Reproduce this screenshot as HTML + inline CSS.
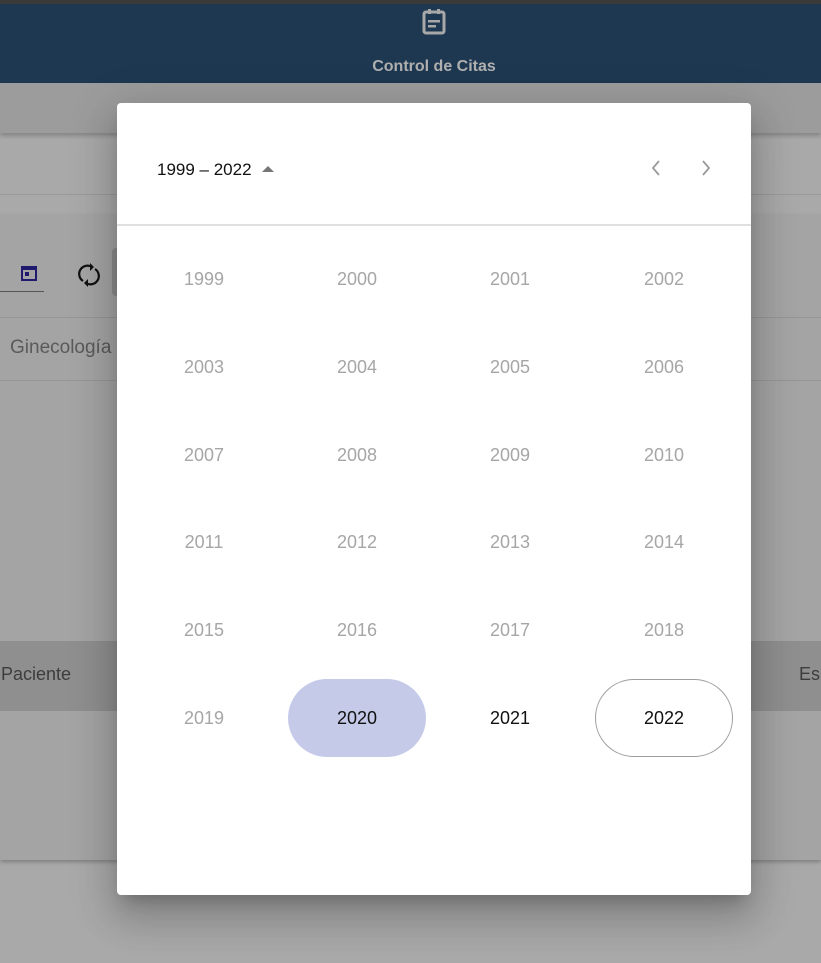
<!DOCTYPE html>
<html><head><meta charset="utf-8"><style>
*{margin:0;padding:0;box-sizing:border-box}
body{width:821px;height:963px;overflow:hidden;background:#a9a9a9;font-family:"Liberation Sans",sans-serif;position:relative}
.abs{position:absolute}
.yr{position:absolute;width:138px;height:78px;line-height:78px;text-align:center;font-size:18px;color:#a6a6a6;border-radius:39px}
</style></head><body>
<div class="abs" style="left:0;top:0;width:821px;height:4px;background:#3a3a3a"></div>
<div class="abs" style="left:0;top:4px;width:821px;height:79px;background:#1e3851"></div>
<svg class="abs" style="left:421px;top:8px" width="26" height="28" viewBox="0 0 26 28"><rect x="3" y="4" width="20" height="21" rx="2" fill="none" stroke="#a8a8a8" stroke-width="3"/><rect x="7" y="1" width="3" height="5" fill="#a8a8a8"/><rect x="16" y="1" width="3" height="5" fill="#a8a8a8"/><rect x="7" y="12" width="12" height="2.5" fill="#a8a8a8"/><rect x="7" y="17" width="8" height="2.5" fill="#a8a8a8"/></svg>
<div class="abs" style="left:0;top:58px;width:868px;text-align:center;font-size:16px;color:#b0b0b0;font-weight:bold">Control de Citas</div>
<div class="abs" style="left:0;top:83px;width:821px;height:50px;background:#9c9c9c;box-shadow:0 3px 4px rgba(0,0,0,.2)"></div>
<div class="abs" style="left:0;top:194px;width:821px;height:1px;background:#999"></div>
<div class="abs" style="left:0;top:215px;width:821px;height:645px;background:#a4a4a4;box-shadow:0 2px 4px rgba(0,0,0,.25)"></div>
<svg class="abs" style="left:20px;top:264px" width="18" height="18" viewBox="0 0 18 18"><rect x="2" y="3" width="14" height="13" fill="none" stroke="#1f1a6e" stroke-width="2"/><rect x="2" y="3" width="14" height="3" fill="#1f1a6e"/><rect x="5" y="8" width="4" height="4" fill="#1f1a6e"/></svg>
<div class="abs" style="left:0;top:291px;width:44px;height:1px;background:#555"></div>
<svg class="abs" style="left:77px;top:261px" width="24" height="28" viewBox="0 0 24 28"><path d="M6 20A8 8 0 0 1 15 6" fill="none" stroke="#111" stroke-width="2.2"/><path d="M18 8A8 8 0 0 1 9 22" fill="none" stroke="#111" stroke-width="2.2"/><path d="M13 2l4 4-4 4z" fill="#111"/><path d="M11 18l-4 4 4 4z" fill="#111"/></svg>
<div class="abs" style="left:112px;top:248px;width:10px;height:48px;background:#8c8c8c;border-radius:4px 0 0 4px"></div>
<div class="abs" style="left:0;top:317px;width:821px;height:1px;background:#969696"></div>
<div class="abs" style="left:10px;top:337px;font-size:19px;color:#5a5a5a">Ginecología</div>
<div class="abs" style="left:0;top:380px;width:821px;height:1px;background:#969696"></div>
<div class="abs" style="left:0;top:641px;width:821px;height:70px;background:#8f8f8f"></div>
<div class="abs" style="left:1px;top:664px;font-size:18px;color:#3d3d3d">Paciente</div>
<div class="abs" style="left:799px;top:664px;font-size:18px;color:#3d3d3d">Es</div>

<div class="abs" style="left:117px;top:103px;width:634px;height:792px;background:#fff;border-radius:4px;box-shadow:0 11px 15px -7px rgba(0,0,0,.2),0 24px 38px 3px rgba(0,0,0,.14),0 9px 46px 8px rgba(0,0,0,.12)">
<div class="abs" style="left:40px;top:57px;font-size:17px;color:#111">1999 – 2022</div>
<svg class="abs" style="left:144px;top:62px" width="14" height="8"><path d="M1 7L7 1l6 6z" fill="#777"/></svg>
<svg class="abs" style="left:533px;top:56px" width="12" height="18"><path d="M9 2L3 9l6 7" fill="none" stroke="#9a9a9a" stroke-width="1.8"/></svg>
<svg class="abs" style="left:583px;top:56px" width="12" height="18"><path d="M3 2l6 7-6 7" fill="none" stroke="#9a9a9a" stroke-width="1.8"/></svg>
<div class="abs" style="left:0;top:121px;width:634px;height:2px;background:#e0e0e0"></div>
<div class="yr" style="left:18px;top:137px">1999</div><div class="yr" style="left:171px;top:137px">2000</div><div class="yr" style="left:324px;top:137px">2001</div><div class="yr" style="left:478px;top:137px">2002</div>
<div class="yr" style="left:18px;top:225px">2003</div><div class="yr" style="left:171px;top:225px">2004</div><div class="yr" style="left:324px;top:225px">2005</div><div class="yr" style="left:478px;top:225px">2006</div>
<div class="yr" style="left:18px;top:313px">2007</div><div class="yr" style="left:171px;top:313px">2008</div><div class="yr" style="left:324px;top:313px">2009</div><div class="yr" style="left:478px;top:313px">2010</div>
<div class="yr" style="left:18px;top:400px">2011</div><div class="yr" style="left:171px;top:400px">2012</div><div class="yr" style="left:324px;top:400px">2013</div><div class="yr" style="left:478px;top:400px">2014</div>
<div class="yr" style="left:18px;top:488px">2015</div><div class="yr" style="left:171px;top:488px">2016</div><div class="yr" style="left:324px;top:488px">2017</div><div class="yr" style="left:478px;top:488px">2018</div>
<div class="yr" style="left:18px;top:576px">2019</div><div class="yr" style="left:171px;top:576px;background:#c5cae9;color:#111">2020</div><div class="yr" style="left:324px;top:576px;color:#111">2021</div><div class="yr" style="left:478px;top:576px;color:#111;border:1px solid #9e9e9e;line-height:76px">2022</div>
</div>
</body></html>
